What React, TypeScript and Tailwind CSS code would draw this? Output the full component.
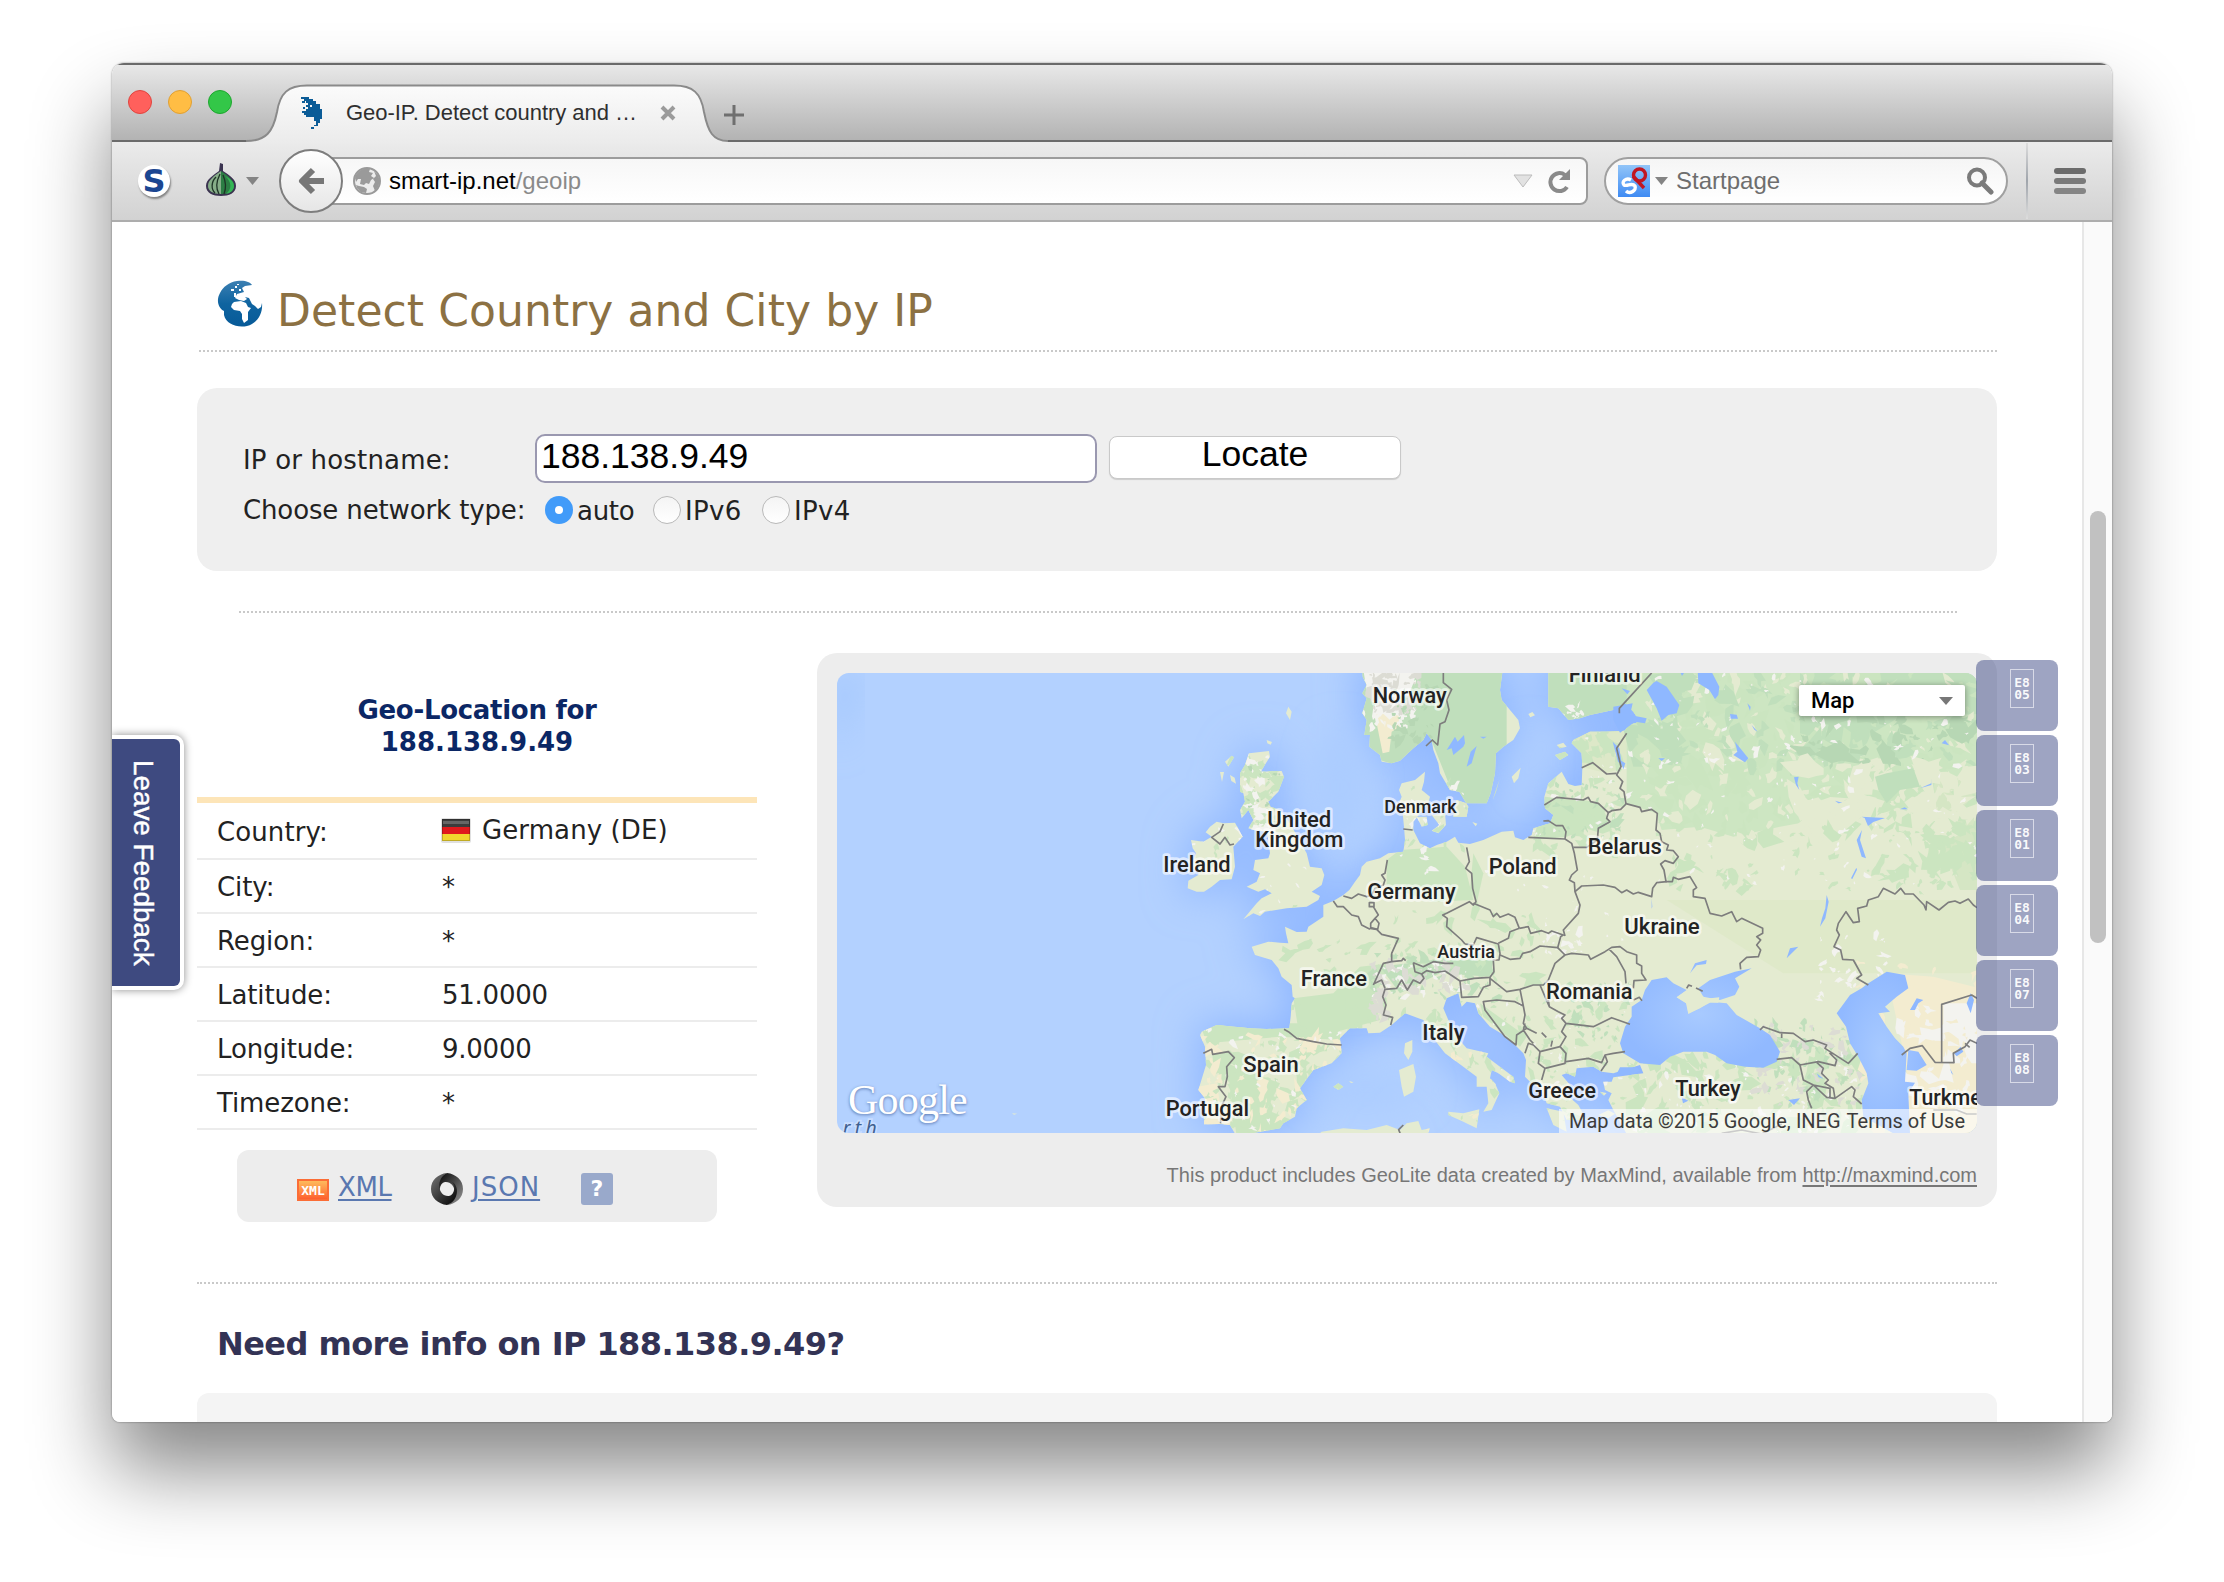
import React from "react";

/* ---------- map data: units are a third of a pixel ---------- */

const CONTINENT =
  "M2400,60 L1045,60 1045,200 1075,205 1105,240 1140,235 1170,225 1250,208 1275,190 1300,215 1320,245 1285,255 1275,272 1220,275 1170,275 1120,300 1115,310 1145,340 1147,385 1145,435 1125,438 1105,432 1085,395 1045,430 1033,470 1035,505 1060,525 1050,550 1000,565 995,585 970,600 945,592 940,572 905,575 850,600 810,612 775,608 765,590 740,605 710,615 690,625 660,610 640,570 640,545 660,520 685,490 690,470 665,450 672,425 675,395 645,420 605,430 597,450 605,470 597,490 608,520 612,560 615,600 610,635 565,640 540,655 500,665 485,680 480,705 465,725 448,750 430,765 400,783 370,795 370,830 325,860 320,875 290,876 255,860 258,880 265,910 240,908 205,905 155,920 165,945 215,960 235,985 245,1010 275,1035 278,1070 285,1075 275,1090 272,1130 268,1165 200,1167 150,1165 50,1155 5,1175 0,1185 15,1220 18,1275 -5,1350 15,1375 12,1453 60,1452 90,1455 110,1490 180,1475 240,1465 250,1450 285,1430 290,1405 320,1380 300,1345 340,1290 395,1270 425,1240 420,1195 450,1165 500,1165 505,1180 540,1178 575,1155 615,1120 670,1140 700,1195 735,1240 790,1280 830,1310 830,1340 860,1340 865,1390 850,1415 875,1410 898,1360 885,1330 870,1315 875,1290 895,1300 930,1325 945,1330 940,1310 900,1280 860,1250 865,1240 800,1225 770,1190 745,1140 730,1105 740,1075 775,1060 785,1100 800,1085 825,1090 835,1120 870,1160 920,1190 945,1215 970,1240 978,1260 975,1310 990,1325 1025,1350 1040,1390 1080,1400 1100,1440 1160,1440 1135,1395 1095,1360 1115,1340 1085,1305 1100,1300 1125,1310 1130,1285 1180,1280 1205,1295 1240,1300 1320,1275 1330,1300 1240,1312 1235,1325 1210,1325 1215,1350 1235,1360 1225,1380 1240,1410 1290,1500 2400,1500 Z";

const ISLANDS = [
  "M147,340 L207,333 210,350 182,395 245,393 252,410 235,455 205,485 212,500 240,510 270,550 320,640 330,680 365,685 373,705 365,735 335,755 360,768 355,780 320,800 260,805 195,815 180,828 160,820 130,838 170,790 185,775 215,760 195,748 175,755 140,740 170,725 180,700 160,690 165,660 205,655 210,640 205,600 200,575 160,570 145,565 160,540 145,510 125,535 120,510 135,485 130,460 120,455 120,430 120,400 135,375 Z",
  "M-27,600 L10,605 35,590 17,577 30,560 50,545 70,550 105,548 128,590 100,620 105,680 95,718 60,720 35,740 12,755 -10,755 -37,745 -35,722 -5,705 -5,690 -30,685 -12,640 -22,625 Z",
  "M485,60 L488,110 500,135 487,160 500,175 487,220 500,240 493,285 510,285 508,320 540,345 545,365 575,370 600,362 640,325 670,300 680,280 695,300 700,330 715,370 720,400 750,450 778,455 805,500 800,530 760,530 770,480 800,490 860,490 872,460 885,400 888,340 910,320 940,300 960,265 955,240 930,210 905,180 900,150 912,60 Z",
  "M695,525 L735,520 738,555 715,580 695,572 718,555 Z M650,530 L680,530 683,555 665,560 Z M817,546 l15,5 -5,8 Z",
  "M615,1210 L637,1200 637,1235 625,1260 612,1240 Z M597,1290 L640,1272 648,1310 640,1355 612,1370 605,1340 Z",
  "M745,1415 L790,1420 838,1408 830,1465 790,1445 745,1425 Z M400,1340 L415,1330 430,1340 415,1350 Z M447,1323 l14,4 -8,2Z",
  "M935,410 L962,383 955,415 942,430 Z M878,480 L898,420 888,455 Z M1065,345 L1095,335 1105,345 1080,360 Z M1070,315 L1090,308 1100,320 1080,325 Z M985,222 l12,-6 8,10 -14,6Z",
  "M265,200 L275,215 270,240 258,220 Z M200,300 l16,6 -4,8 -10,-4Z M75,365 L95,347 102,352 85,380 Z M60,396 h12 l-6,30Z M90,405 l14,8 4,18 -14,-8Z M-564,1420 l16,1 -10,3Z",
  "M350,1490 L365,1475 430,1465 500,1470 560,1455 600,1470 620,1450 655,1443 665,1470 690,1465 680,1490 Z M1040,1405 l50,10 10,60 -40,-20Z M1200,1355 l20,4 -8,8Z M1195,1425 l30,-14 20,10 -20,14Z",
];

const LAKES = [
  "M740,330 L765,290 773,305 792,285 795,310 790,320 760,345 755,325 Z M800,380 L812,335 830,318 815,370 Z M840,290 h20 l-10,6Z",
  "M1340,150 L1360,128 1370,123 1400,140 1438,195 1430,220 1405,225 1385,242 1370,205 Z",
  "M1493,90 L1532,90 1558,140 1555,165 1545,178 1528,150 1495,130 Z M1438,90 h20 l-12,18Z",
  "M1240,200 L1298,190 1290,225 1340,235 1335,250 1305,245 1260,278 1240,240 Z M1265,145 l25,8 -8,10Z",
  "M1238,305 l20,20 8,50 -12,-10Z M1260,360 l16,10 -6,18Z",
  "M1605,305 L1645,355 1635,367 1600,345 1612,335 Z M1590,222 l20,2 4,12 -22,0Z M1642,190 l10,10 -2,12Z M1655,255 l18,20 -10,-6Z",
  "M1782,412 l14,-2 -4,20 6,20 -10,-15Z M1985,530 l70,4 -35,12 -16,12 -10,-24Z M1970,600 L1986,570 1980,600 1998,655 1985,650Z M1953,715 l16,-32 2,6 -14,28Z",
  "M2160,445 l34,-15 2,-15 -2,20Z M2225,310 l10,-10 12,16Z M1905,482 l22,6 -12,2Z M2100,508 l14,-6 10,6Z M1375,355 l20,0 -10,8Z",
  "M1880,765 l6,20 -10,50 -16,25 6,-25 10,-30Z M1355,775 l2,25 -2,6Z",
];

const BLACK_SEA =
  "M1355,1020 L1400,1012 1420,1030 1460,1050 1430,1072 1460,1090 1465,1120 1500,1105 1530,1085 1580,1090 1610,1125 1680,1165 1710,1185 1740,1235 1730,1265 1690,1283 1635,1280 1580,1270 1545,1245 1520,1235 1450,1235 1410,1250 1380,1275 1320,1270 1270,1240 1260,1210 1275,1160 1295,1130 1295,1100 1325,1080 1335,1050 Z M1495,1045 L1530,1020 1605,995 1655,985 1605,1015 1618,1040 1605,1065 1560,1080 1510,1070 Z M1470,1000 l15,-30 35,-10 -2,12 -28,4Z";

const CASPIAN =
  "M2005,1030 L2060,995 2115,1005 2125,1045 2090,1070 2055,1100 2070,1115 2035,1120 2060,1160 2085,1195 2110,1220 2120,1240 2115,1325 2145,1328 2125,1360 2130,1480 2080,1480 1990,1430 1985,1380 2005,1330 2000,1300 1975,1250 1950,1210 1938,1160 1910,1120 1950,1065 1985,1045 Z M2125,1230 L2155,1235 2180,1275 2150,1292 2120,1290 Z";

const EAST_WATER =
  "M1760,955 l10,-30 25,-5 -20,20Z M2130,1110 l20,-35 20,5 -15,10 -10,20Z M2300,1090 l12,-30 10,20 -10,40Z M2262,1240 l20,-20 8,15 -20,14Z M1765,1380 l35,-5 -18,20Z M1850,1300 l20,16 -14,-4Z M1260,1282 h50 l10,10 -30,12 -40,-2Z M1445,1372 l20,10 -16,8Z M2250,1285 l10,20 -6,-6Z";

const BORDERS = [
  "M70,552 L60,575 35,592 60,612 75,592 90,615 102,612",
  "M730,90 V128 L755,148 740,180 747,210 735,245 720,252 713,315 697,300 678,318",
  "M1355,99 L1258,205 1258,220",
  "M610,567 L638,570",
  "M1280,280 L1250,325 1263,380 1250,405 1268,425 1260,445 1272,455 1278,492",
  "M1145,383 L1178,368 1220,402 1250,400",
  "M1033,495 L1070,472 1150,480 1165,472 1172,485 1195,490 1225,518 1235,512 1262,508 1278,492",
  "M1225,518 L1220,535 1230,545 1195,565 1192,600 1160,622 1120,622",
  "M1030,543 L1045,542 1068,557 1088,557 1098,575 1095,597 M985,592 L1095,597 1115,610 1123,640 1132,690 1115,705 1108,720 1123,728 1125,755 1140,795 1135,820 1090,870 1095,888",
  "M1125,755 L1145,738 1210,735 1245,742 1265,758 1280,750 1300,762 1315,757 1355,770 1358,745 1370,728 1400,725",
  "M1275,490 L1320,502 1325,515 1355,508 1372,520 1368,570 1380,580 1385,605 1405,615 1400,630 1420,632 1435,650 1420,670 1395,662 1382,672 1392,690 1398,725 1417,725 1420,712 1435,718 1470,710 1490,743 1480,750 1480,770 1515,775 1530,820 1565,828 1595,815 1610,845 1625,835 1688,865 1688,880 1670,890 1682,900 1670,915 1682,930 1675,950 1640,952 1620,970 1622,988",
  "M2331,803 L2320,795 2305,777 2280,790 2265,783 2245,787 2217,810 2180,785 2178,810 2172,795 2140,762 2115,762 2102,745 2085,762 2050,745 2035,770 2005,780 2000,798 1973,805 1978,845 1960,848 1938,815 1915,850 1910,870 1918,885 1902,920 1922,930 1928,958 1960,960 1985,1005 1970,1015 2005,1035",
  "M2331,1075 L2315,1065 2225,1093 2225,1268 M2105,1245 L2130,1225 2167,1217 2205,1267 2262,1268 2260,1240 2295,1220 2310,1200 2331,1210 M2295,1210 l14,12",
  "M1680,1170 L1690,1160 1740,1178 1780,1180 1815,1205 1840,1200 1880,1215 1875,1225 1945,1270 1973,1240 M1730,1258 L1775,1253 1800,1275 1855,1265 1905,1277 1910,1260 1890,1240 1900,1240 M1745,1180 v14",
  "M1800,1275 L1810,1320 1840,1335 1820,1355 1825,1380 1835,1405 M1850,1267 L1870,1285 1865,1300 1885,1320 1875,1330 1900,1345 1905,1375 1880,1372 1840,1335 1890,1345 1890,1372 M1905,1375 L1955,1340 1965,1350 1960,1370 1985,1392",
  "M1460,1045 l6,-10 10,4 M1488,1044 l20,10",
  "M800,622 L808,665 797,685 815,700 818,745 828,785 820,795 808,785 740,820 728,825 742,835 740,860 785,900 795,912",
  "M562,660 L555,700 545,705 555,720 550,735 525,745 515,765 500,770 475,762 455,775 430,768",
  "M400,783 L412,800 430,800 455,825 475,830 485,855 510,868 M508,788 h14 v12 h-14 Z M520,800 L535,825 525,835 512,850 512,863 533,868 537,850 525,835",
  "M510,865 L530,868 545,883 595,895 575,940 575,965 605,962 610,955 617,962 M575,965 L550,970 520,1035 M520,1032 L545,1020 555,1045",
  "M640,968 L645,995 665,1002 672,1015 660,1030 640,1020 622,1050 605,1020 590,1045 555,1048 548,1070 558,1095 550,1125 578,1132 572,1155",
  "M640,968 L670,980 700,965 735,970 760,970 M795,912 L820,915 830,893 895,912 900,940 897,960 880,960 882,995 870,1012 822,1015 780,1023 735,993 705,998 680,992 665,1002",
  "M820,790 L870,810 880,830 890,820 900,832 925,822 945,832 958,865 M958,865 L930,875 925,895 895,910",
  "M958,865 L985,860 992,880 1025,872 1045,880 1055,873 1090,885 1082,890 1073,923 1020,918 990,935 968,940 960,955 930,958 900,945",
  "M1073,923 L1095,945 1115,940 1165,945 1172,958 1215,935 1235,922 1260,920 1280,935 1310,945 1310,970 1325,978 1325,1000 1338,1020 1302,1022 1300,1045 M1228,928 L1250,950 1275,995 1278,1030",
  "M1095,945 L1065,970 1045,1020 1030,1035 1000,1035 960,1048 920,1055 870,1015",
  "M780,1023 L785,1072 835,1070 850,1042 870,1035 870,1012",
  "M850,1085 L890,1080 945,1085 970,1098 975,1125 970,1150 980,1165 950,1185 948,1215 915,1190 855,1110 Z M960,1048 L970,1098 M980,1165 L1010,1180 M975,1150 l-5,20 20,30 10,10",
  "M1020,1035 L1035,1070 1048,1100 1075,1115 1095,1125 1085,1135 1098,1150 1180,1160 1235,1133 1290,1153 M1098,1150 L1085,1175 1098,1190 1080,1220 M1045,1080 l3,20 M1025,1178 l14,14 M1057,1202 l-4,18",
  "M1020,1235 L1080,1220 1098,1240 1095,1270 1035,1285 1015,1270 Z M975,1240 L985,1210 1000,1215 1020,1235 M1035,1285 L1025,1320",
  "M1098,1265 L1165,1255 1205,1268 1215,1245 1240,1240 1275,1235 M1215,1245 L1222,1265 1203,1293",
  "M252,1168 L265,1175 290,1195 340,1205 380,1212 425,1215",
  "M10,1240 L35,1228 38,1243 85,1235 103,1253 80,1280 82,1310 75,1340 55,1340 78,1370 62,1405 62,1450",
  "M610,1455 l-14,14 8,20 M1565,1480 l60,-10 60,12 60,-30 M2200,1410 h70 l30,12 30,0",
  "M1300,1080 l18,-8 8,10",
];

function rng(seed: number) {
  let s = seed;
  return () => {
    s = (s * 1664525 + 1013904223) % 4294967296;
    return s / 4294967296;
  };
}

/** One path holding many small irregular polygons: the land-cover mottling. */
function patches(seed: number, n: number, x0: number, y0: number, x1: number, y1: number, size: number) {
  const r = rng(seed);
  let d = "";
  for (let i = 0; i < n; i++) {
    const cx = x0 + r() * (x1 - x0);
    const cy = y0 + r() * (y1 - y0);
    const k = size * (0.3 + r() * r() * 1.6);
    const v = 5 + Math.floor(r() * 7);
    const tilt = r() * 3;
    for (let j = 0; j < v; j++) {
      const a = (j / v) * Math.PI * 2;
      const q = k * (0.25 + r() * 1.15);
      const px = Math.cos(a) * q * 1.4;
      const py = Math.sin(a) * q * 0.75;
      const x = cx + px * Math.cos(tilt) - py * Math.sin(tilt);
      const y = cy + px * Math.sin(tilt) + py * Math.cos(tilt);
      d += (j ? "L" : "M") + x.toFixed(0) + "," + y.toFixed(0);
    }
    d += "Z";
  }
  return d;
}

const G1 = "#cbe5c0";
const G2 = "#c0dfbc";
const G3 = "#b7d7b4";
const CR = "#e4ebd1";
const BE = "#f3ecd0";
const WH = "#f3f3ef";
const GY = "#dcdcd4";

const COVER: [string, string][] = [
  [G1, patches(3, 200, 1330, 100, 2340, 600, 30)],
  [CR, patches(4, 130, 1330, 100, 2340, 600, 17)],
  [G2, patches(5, 90, 1330, 100, 2340, 380, 32)],
  [G3, patches(6, 45, 1780, 200, 2340, 380, 26)],
  [CR, patches(42, 60, 1800, 360, 2340, 600, 34)],
  [G1, patches(7, 60, 1400, 560, 2340, 760, 18)],
  [G1, patches(43, 40, 2150, 560, 2340, 740, 24)],
  [WH, patches(8, 130, 1330, 100, 2340, 740, 8)],
  [G1, patches(9, 70, 1000, 270, 1270, 640, 20)],
  [G2, patches(44, 24, 1030, 420, 1270, 600, 14)],
  [WH, patches(10, 34, 1000, 270, 1300, 640, 9)],
  [WH, patches(45, 20, 860, 640, 1300, 900, 6)],
  [G1, patches(11, 80, 230, 800, 1000, 1180, 20)],
  [G2, patches(12, 60, 520, 940, 900, 1080, 14)],
  [WH, patches(13, 50, 520, 970, 800, 1070, 10)],
  [GY, patches(14, 40, 510, 970, 800, 1060, 13)],
  [GY, patches(46, 26, 515, 1040, 560, 1140, 12)],
  [WH, patches(47, 14, 290, 1195, 420, 1225, 8)],
  [G1, patches(15, 80, 0, 1160, 430, 1480, 24)],
  [BE, patches(16, 70, -10, 1190, 420, 1480, 19)],
  [WH, patches(17, 40, 0, 1160, 430, 1480, 8)],
  [G1, patches(18, 130, 690, 1080, 1300, 1480, 17)],
  [BE, patches(19, 30, 680, 1180, 900, 1480, 12)],
  [WH, patches(20, 50, 800, 1060, 1300, 1400, 7)],
  [G2, patches(48, 34, 1090, 1020, 1290, 1200, 13)],
  [WH, patches(49, 24, 1000, 860, 1150, 940, 9)],
  [G1, patches(21, 100, 1300, 1240, 2000, 1480, 24)],
  [G2, patches(22, 60, 1640, 1140, 2000, 1400, 15)],
  [WH, patches(23, 80, 1300, 1240, 2000, 1480, 8)],
  [GY, patches(24, 60, 1660, 1150, 2000, 1400, 12)],
  [WH, patches(25, 30, 1850, 880, 2060, 1080, 11)],
  [BE, patches(26, 60, 1980, 960, 2340, 1480, 26)],
  [WH, patches(27, 40, 2080, 1100, 2340, 1440, 24)],
  [G1, patches(28, 50, 120, 340, 250, 560, 18)],
  [WH, patches(29, 46, 110, 340, 210, 620, 13)],
  [G3, patches(30, 16, 120, 380, 240, 500, 9)],
  [WH, patches(31, 16, 140, 620, 370, 830, 6)],
  [G1, patches(32, 10, -30, 550, 120, 750, 9)],
  [WH, patches(33, 8, -40, 550, 60, 620, 12)],
  [G1, patches(34, 24, 600, 430, 830, 640, 12)],
  [WH, patches(35, 30, 590, 420, 800, 700, 9)],
  [WH, patches(36, 60, 485, 90, 640, 260, 17)],
  [GY, patches(38, 70, 500, 95, 660, 220, 14)],
  [G3, patches(39, 34, 580, 140, 700, 310, 14)],
  [WH, patches(40, 14, 1040, 190, 1150, 250, 8)],
];

const LABELS: { t: string; x: number; y: number; w: number; s?: number }[] = [
  { t: "Norway", x: 518, y: 188, w: 222 },
  { t: "Finland", x: 1106, y: 126, w: 216 },
  { t: "United", x: 202, y: 560, w: 192 },
  { t: "Kingdom", x: 166, y: 620, w: 264 },
  { t: "Denmark", x: 553, y: 519, w: 217, s: 56 },
  { t: "Ireland", x: -110, y: 696, w: 202 },
  { t: "Belarus", x: 1163, y: 641, w: 222 },
  { t: "Poland", x: 866, y: 701, w: 204 },
  { t: "Germany", x: 502, y: 776, w: 265 },
  { t: "Ukraine", x: 1273, y: 881, w: 226 },
  { t: "Austria", x: 712, y: 955, w: 173, s: 56 },
  { t: "France", x: 302, y: 1038, w: 199 },
  { t: "Romania", x: 1038, y: 1076, w: 260 },
  { t: "Italy", x: 667, y: 1199, w: 127 },
  { t: "Spain", x: 130, y: 1296, w: 166 },
  { t: "Greece", x: 985, y: 1374, w: 203 },
  { t: "Turkey", x: 1426, y: 1368, w: 196 },
  { t: "Portugal", x: -103, y: 1427, w: 250 },
  { t: "Turkmenistan", x: 2128, y: 1394, w: 392 },
];

function EuropeMap() {
  return (
    <svg viewBox="-1089 99 3420 1380" width="1140" height="460" className="block">
      <defs>
        <filter id="soft" x="-20%" y="-20%" width="140%" height="140%">
          <feGaussianBlur stdDeviation="62" />
        </filter>
        <filter id="soft2" x="-40%" y="-40%" width="180%" height="180%">
          <feGaussianBlur stdDeviation="50" />
        </filter>
        <radialGradient id="bs">
          <stop offset="0" stopColor="#a8caff" />
          <stop offset="1" stopColor="#91b9ff" />
        </radialGradient>
        <clipPath id="land">
          <path d={CONTINENT} />
          {ISLANDS.map((d) => (
            <path key={d} d={d} />
          ))}
        </clipPath>
      </defs>
      <rect x="-1089" y="99" width="3420" height="1380" fill="#b3d1ff" />
      <g filter="url(#soft)" fill="#8db5ff" stroke="#8db5ff" strokeWidth="24">
        <path d={CONTINENT} />
        {ISLANDS.slice(0, 3).map((d) => (
          <path key={d} d={d} />
        ))}
      </g>
      <g filter="url(#soft2)" fill="#abccff">
        <ellipse cx="420" cy="440" rx="80" ry="180" />
        <ellipse cx="500" cy="1350" rx="170" ry="50" />
        <ellipse cx="990" cy="360" rx="20" ry="100" />
      </g>
      <path d="M-1089,99 h60 l-30,160 -30,80Z" fill="#9dc3fb" filter="url(#soft2)" />
      <g clipPath="url(#land)">
        <rect x="-1089" y="99" width="3420" height="1380" fill={CR} />
        <path d="M480,60 H920 V330 L880,500 800,490 750,440 690,290 600,380 480,340Z" fill={G2} />
        <path d="M485,60 H660 L640,130 620,180 560,230 540,190 500,150Z" fill={WH} />
        <path d="M520,200 L580,190 608,215 600,260 575,275 568,335 548,340 538,290Z" fill={BE} />
        <path d="M745,440 L810,500 805,535 760,535Z" fill="#dde8c8" />
        <path d="M1040,60 H1400 V300 H1000Z" fill={G2} />
        <path d="M1110,260 H1280 V380 L1220,400 1100,370Z" fill="#dde8c8" />
        <path d="M1280,60 H2400 V420 L2250,480 2000,380 1850,540 1740,560 1600,590 1500,560 1385,570 1368,520 1280,490Z" fill="#cde6c2" />
        <path d="M1800,90 H2400 V220 L2100,230 1950,320 1800,280Z" fill={G2} />
        <path d="M1265,250 L1400,270 1480,300 1420,380 1300,380Z" fill={G2} />
        <path d="M1980,370 L2040,350 2100,370 2110,390 2030,410 1990,400Z" fill={CR} />
        <path d="M2200,420 h140 v330 h-60 L2220,600Z" fill="#d5e6c4" />
        <path d="M1035,470 L1200,490 1225,540 1100,590 1000,600Z" fill={G1} />
        <path d="M600,630 L740,620 795,680 820,780 700,785 560,740 560,660Z" fill={G1} />
        <path d="M820,640 l30,60 -20,90 -20,-40Z" fill={G1} />
        <path d="M280,1075 L400,1060 480,980 570,970 520,1080 540,1140 430,1170 300,1200Z" fill={G1} />
        <path d="M540,980 L700,960 880,960 870,1010 720,1000 600,1060Z" fill={G2} />
        <path d="M0,1150 h420 v50 l-180,-10 -220,20Z" fill={G1} />
        <path d="M80,1270 l160,60 -40,80 100,40 -60,40 h-130Z" fill={G1} />
        <path d="M840,1090 l140,100 -20,30 -110,-90Z" fill={G1} />
        <path d="M1400,780 H2400 V1000 H1750Z" fill="#dfe9c9" />
        <path d="M2060,1000 L2200,1010 2400,1060 V1480 H2120 V1280Z" fill={BE} />
        <path d="M2230,1090 h120 v180 h-120Z" fill={WH} />
        <path d="M-60,1350 l110,-20 20,120 -90,20Z" fill={BE} />
        {COVER.map(([c, d]) => (
          <path key={d.slice(0, 30)} d={d} fill={c} />
        ))}
        <path d="M2025,410 L2060,400 2140,385 2160,440 2100,450 2060,490 2035,450Z" fill={G2} />
      </g>
      <g fill="#8fb8ff">
        {LAKES.map((d) => (
          <path key={d} d={d} />
        ))}
        <path d={EAST_WATER} />
      </g>
      <path d={BLACK_SEA} fill="url(#bs)" />
      <path d="M1430,1072 L1462,1050 1500,1062 1518,1076 1558,1072 1555,1088 1530,1088 1465,1122 1458,1090Z" fill={CR} />
      <path d={CASPIAN} fill="url(#bs)" />
      <g fill="none" stroke="#7d7d7d" strokeWidth="5" strokeLinejoin="round">
        {BORDERS.map((d) => (
          <path key={d} d={d} />
        ))}
      </g>
      <g
        fontFamily="Roboto, sans-serif"
        fontWeight="500"
        fill="#232323"
        stroke="#ffffff"
        strokeOpacity="0.6"
        strokeWidth="16"
        strokeLinejoin="round"
        style={{ paintOrder: "stroke" }}
      >
        {LABELS.map((l) => (
          <text key={l.t} x={l.x} y={l.y} fontSize={l.s ?? 67} textLength={l.w} lengthAdjust="spacingAndGlyphs">
            {l.t}
          </text>
        ))}
      </g>
      <text
        x="-1072"
        y="1484"
        fontFamily="'Noto Sans', sans-serif"
        fontStyle="italic"
        fontSize="58"
        fill="#3f5f8f"
        stroke="#c9deff"
        strokeWidth="10"
        letterSpacing="13"
        style={{ paintOrder: "stroke" }}
      >
        rth
      </text>
    </svg>
  );
}

/* ---------- small icons ---------- */

function TabShape() {
  return (
    <svg width="482" height="60" viewBox="0 0 482 60" className="absolute left-[134px] top-[19px]">
      <defs>
        <linearGradient id="tab" x1="0" y1="0" x2="0" y2="1">
          <stop offset="0" stopColor="#fbfbfb" />
          <stop offset="1" stopColor="#ebebeb" />
        </linearGradient>
      </defs>
      <path
        d="M0,60 V57 C20,57 27,48 31,28 C34,9 42,1.5 61,1.5 H428 C447,1.5 455,9 458,28 C462,48 467,57 482,57 V60Z"
        fill="url(#tab)"
      />
      <path
        d="M0,57 C20,57 27,48 31,28 C34,9 42,1.5 61,1.5 H428 C447,1.5 455,9 458,28 C462,48 467,57 482,57"
        fill="none"
        stroke="#8a8a8a"
        strokeWidth="2"
      />
    </svg>
  );
}

const Favicon = () => (
  <svg width="24" height="32" viewBox="0 0 24 32" className="shrink-0">
    <path
      fill="#0b5c97"
      d="M1,0H9V2H13V4H16V7H20V12H22V22H20V26H18V29H14V32H11V30H14V28H16V24H14V20H6V18H4V16H2V14H6V12H8V10H6V8H8V6H6V4H4V2H1Z M2,4h3v2h-3z M3,10h2v2h-2z M10,8h2v2h-2z"
      fillRule="evenodd"
    />
  </svg>
);

const HeadGlobe = () => (
  <svg width="46" height="48" viewBox="0 0 46 48">
    <defs>
      <linearGradient id="gl" x1="0" y1="0" x2="0" y2="1">
        <stop offset="0" stopColor="#3b7fb2" />
        <stop offset="0.5" stopColor="#0f64a0" />
        <stop offset="1" stopColor="#075a98" />
      </linearGradient>
    </defs>
    <path
      fill="url(#gl)"
      d="M20,1 C28,0 33,2 35,5 L28,6 L25,8 L27,12 L20,14 L18,18 L22,20 L27,21 L30,19 L28,17 L32,18 L35,24 L38,26 L41,29 L44,27 L45,23 C46,33 41,43 30,46 C20,48 9,44 7,35 L7,31 C1,28 -1,20 3,13 C6,7 12,2 20,1Z"
    />
    <path
      fill="#fff"
      d="M15,24 L17,22 L24,21 L29,23 L31,27 L34,28 L31,32 L31,40 L27,43 L25,39 L25,34 L23,31 L17,30 L14,27Z M14,9h3v2h-3z M18,6h2v2h-2z M22,9h2v2h-2z M17,13h2v4h-2z M20,4h2v1h-2z"
    />
  </svg>
);

const Flag = () => (
  <svg width="32" height="30" viewBox="0 0 32 30" className="-ml-[2px] mt-[2px]">
    <rect x="1" y="1" width="30" height="25" rx="2" fill="#000" opacity="0.12" />
    <rect x="2" y="2" width="28" height="8" fill="#3c3c3c" />
    <rect x="3" y="4" width="26" height="3" fill="#666" />
    <rect x="2" y="10" width="28" height="7" fill="#e01a1d" />
    <rect x="2" y="17" width="28" height="7" fill="#f1d62e" />
    <rect x="2.5" y="2.5" width="27" height="21" fill="none" stroke="#000" strokeOpacity="0.2" />
  </svg>
);

const Onion = () => (
  <svg width="32" height="34" viewBox="0 0 32 34">
    <path d="M15,0 L18,1 L18,8 C24,12 31,16 31,23 C31,30 24,33 16,33 C8,33 1,30 1,23 C1,16 9,12 14,8Z" fill="#3b3350" />
    <path d="M16,8 C9,13 3,17 3,23 C3,28 8,31 16,31 Z" fill="#86ad88" />
    <path d="M16,8 C23,13 29,17 29,23 C29,28 24,31 16,31 Z" fill="#2c7d44" />
    <path d="M20,13 C27,19 27,26 21,31 C26,30 29,27 29,23 C29,18 24,15 20,13Z" fill="#35b556" />
    <path d="M11,14 C6,19 6,26 10,30 M15,11 C11,19 11,26 14,31 M18,12 C21,19 21,26 19,31" fill="none" stroke="#1d3325" strokeWidth="1.3" />
  </svg>
);

const GreyGlobe = () => (
  <svg width="28" height="28" viewBox="0 0 28 28" className="shrink-0">
    <circle cx="14" cy="14" r="13" fill="#ececec" stroke="#9a9a9a" strokeWidth="2" />
    <path
      fill="#9a9a9a"
      d="M2,11 C3,6 8,2 13,1.5 L17,2 L16,5 L20,6 L18,9 L21,11 L18,13 L16,17 L13,16 L11,18 L7,17 L8,12 L5,12 L3,15Z M21,4 L25,8 L27,14 L25,20 L22,24 L20,19 L22,15 L20,12 L23,9Z M3,18 L6,19 L11,20 L14,22 L13,26 L8,25 L4,21Z"
    />
  </svg>
);

const SpIcon = () => (
  <svg width="32" height="32" viewBox="0 0 32 32" className="shrink-0">
    <defs>
      <linearGradient id="sp" x1="0" y1="0" x2="0" y2="1">
        <stop offset="0" stopColor="#92c5f8" />
        <stop offset="1" stopColor="#3f8bf3" />
      </linearGradient>
    </defs>
    <rect width="32" height="32" fill="url(#sp)" />
    <path d="M13,15 C8,12 3,17 6,20 C9,22 14,17 17,21 C19,25 12,30 8,26" fill="none" stroke="#fff" strokeWidth="3.4" />
    <circle cx="21.5" cy="10" r="6" fill="none" stroke="#c11621" strokeWidth="3.4" />
    <path d="M15,11 L26,23" stroke="#c11621" strokeWidth="3.4" />
  </svg>
);

const JsonIcon = () => (
  <svg width="32" height="32" viewBox="0 0 32 32">
    <defs>
      <linearGradient id="js1" x1="0" y1="0" x2="1" y2="1">
        <stop offset="0" stopColor="#000" />
        <stop offset="1" stopColor="#9a9a9a" />
      </linearGradient>
      <linearGradient id="js2" x1="1" y1="1" x2="0" y2="0">
        <stop offset="0" stopColor="#000" />
        <stop offset="1" stopColor="#777" />
      </linearGradient>
    </defs>
    <path d="M16,0 C25,1 32,7 32,16 C32,25 25,31 16,32 C28,26 25,8 14,9 C8,10 7,20 12,24 C3,20 4,4 16,0Z" fill="url(#js1)" />
    <path d="M16,32 C7,31 0,25 0,16 C0,7 7,1 16,0 C4,6 7,24 18,23 C24,22 25,12 20,8 C29,12 28,28 16,32Z" fill="url(#js2)" />
  </svg>
);

const Triangle = ({ w, h, c }: { w: number; h: number; c: string }) => (
  <svg width={w} height={h} viewBox="0 0 14 8" preserveAspectRatio="none" className="shrink-0">
    <path d="M0,0H14L7,8Z" fill={c} />
  </svg>
);

/* ---------- browser chrome ---------- */

function TitleBar() {
  return (
    <div className="relative h-[79px] shrink-0 border-t-2 border-b-2 border-t-[#6a6a6a] border-b-[#6b6b6b] bg-linear-to-b from-[#e8e8e8] to-[#b3b3b3]">
      <div className="absolute left-[16px] top-[25px] flex gap-[16px]">
        <div className="size-[24px] rounded-full border border-[#e0443e] bg-[#ff605c]" />
        <div className="size-[24px] rounded-full border border-[#e0a033] bg-[#ffbd44]" />
        <div className="size-[24px] rounded-full border border-[#1da72e] bg-[#33c748]" />
      </div>
      <TabShape />
      <div className="absolute left-[188px] top-[30px] flex h-[36px] items-center">
        <Favicon />
        <span className="ml-[22px] w-[292px] whitespace-nowrap text-[22px] leading-[36px] tracking-[-0.03px] text-[#2f2f2f]">
          Geo-IP. Detect country and …
        </span>
        <svg width="16" height="16" viewBox="0 0 16 16" className="ml-[22px]">
          <path d="M2,2L14,14M14,2L2,14" stroke="#9b9b9b" strokeWidth="4" />
        </svg>
      </div>
      <svg width="22" height="22" viewBox="0 0 22 22" className="absolute left-[611px] top-[39px]">
        <path d="M11,1V21M1,11H21" stroke="#6f6f6f" strokeWidth="3" />
      </svg>
    </div>
  );
}

function ToolBar() {
  return (
    <div className="flex h-[80px] shrink-0 items-center border-b-2 border-[#adadad] bg-linear-to-b from-[#ebebeb] to-[#d2d2d2]">
      <div className="ml-[26px] flex size-[32px] items-center justify-center rounded-full bg-white shadow-[1px_2px_2px_rgba(0,0,0,0.4)]">
        <span className="font-['DejaVu_Sans'] text-[32px] font-bold leading-[32px] text-[#1b4691]">S</span>
      </div>
      <div className="ml-[35px] -mt-[2px]">
        <Onion />
      </div>
      <div className="ml-[9px]">
        <Triangle w={13} h={8} c="#848484" />
      </div>
      <div className="z-10 ml-[20px] flex size-[64px] shrink-0 items-center justify-center rounded-full border-2 border-[#7d7d7d] bg-linear-to-b from-white to-[#e6e6e6]">
        <svg width="28" height="30" viewBox="0 0 28 30">
          <path d="M16,4L5,15L16,26M6,15H27" fill="none" stroke="#777" strokeWidth="6" strokeLinejoin="round" />
        </svg>
      </div>
      <div className="-ml-[14px] flex h-[48px] w-[1259px] items-center rounded-r-[8px] border-2 border-[#9c9c9c] bg-linear-to-b from-[#f7f7f7] to-white pl-[22px]">
        <GreyGlobe />
        <span className="ml-[8px] text-[24px] leading-[44px] text-black">
          smart-ip.net<span className="text-[#8a8a8a]">/geoip</span>
        </span>
        <div className="ml-auto mr-[12px] flex items-center gap-[14px]">
          <svg width="20" height="14" viewBox="0 0 20 14">
            <path d="M1,1H19L10,13Z" fill="#e2e2e2" stroke="#bcbcbc" />
          </svg>
          <svg width="25" height="26" viewBox="0 0 25 26" className="mr-[2px]">
            <path d="M20,19 A9,9 0 1 1 18,7" fill="none" stroke="#8a8a8a" strokeWidth="4" />
            <path d="M23,1V12H12Z" fill="#8a8a8a" />
          </svg>
        </div>
      </div>
      <div className="ml-[16px] flex h-[48px] w-[404px] items-center rounded-full border-2 border-[#a0a0a0] bg-linear-to-b from-[#f5f5f5] to-white pl-[12px] pr-[12px]">
        <SpIcon />
        <span className="ml-[5px]">
          <Triangle w={13} h={8} c="#848484" />
        </span>
        <span className="ml-[8px] text-[24px] leading-[44px] text-[#6e6e6e]">Startpage</span>
        <svg width="28" height="28" viewBox="0 0 28 28" className="ml-auto">
          <circle cx="11" cy="10.5" r="8" fill="none" stroke="#7b7b7b" strokeWidth="4" />
          <path d="M16,16L25,25" stroke="#7b7b7b" strokeWidth="5" strokeLinecap="round" />
        </svg>
      </div>
      <div className="ml-[18px] h-[76px] w-[2px] bg-linear-to-b from-[#dddddd] via-[#a0a5ac] to-[#dddddd]" />
      <div className="ml-[26px] flex flex-col gap-[4px]">
        <div className="h-[6px] w-[32px] rounded-[3px] bg-[#6c6c6c]" />
        <div className="h-[6px] w-[32px] rounded-[3px] bg-[#7a7a7a]" />
        <div className="h-[6px] w-[32px] rounded-[3px] bg-[#858585]" />
      </div>
    </div>
  );
}

/* ---------- page ---------- */

function Radio({ label, checked }: { label: string; checked?: boolean }) {
  return (
    <label className="flex items-center">
      {checked ? (
        <span className="flex size-[28px] items-center justify-center rounded-full bg-[#419bf9]">
          <span className="size-[8px] rounded-full bg-white" />
        </span>
      ) : (
        <span className="size-[28px] rounded-full border border-[#b9b9b9] bg-linear-to-b from-[#f4f4f4] to-white" />
      )}
      <span className="ml-[4px] mt-px">{label}</span>
    </label>
  );
}

function SearchForm() {
  return (
    <div className="h-[183px] rounded-[20px] bg-[#efefef] pl-[46px] pt-[46px] font-['DejaVu_Sans',sans-serif] text-[26px] text-[#222]">
      <div className="flex h-[49px]">
        <span className="w-[292px] pt-[10px] leading-[32px] tracking-[0.18px]">IP or hostname:</span>
        <div className="h-[49px] w-[562px] rounded-[10px] border-2 border-[#9a98b0] bg-white pl-[4px] font-['Liberation_Sans'] text-[35.5px] leading-[41px] text-black">
          188.138.9.49
        </div>
        <div className="ml-[12px] mt-[2px] h-[43px] w-[292px] rounded-[8px] border border-[#c9c9c9] bg-white text-center font-['Liberation_Sans'] text-[35.5px] leading-[35px] text-black shadow-[0_1px_1px_rgba(0,0,0,0.15)]">
          Locate
        </div>
      </div>
      <div className="mt-[11px] flex h-[32px] items-center leading-[32px]">
        <span className="w-[302px] whitespace-nowrap tracking-[-0.13px]">Choose network type:</span>
        <div className="w-[108px] tracking-[-0.3px]">
          <Radio label="auto" checked />
        </div>
        <div className="w-[109px] tracking-[0.3px]">
          <Radio label="IPv6" />
        </div>
        <div className="tracking-[0.3px]">
          <Radio label="IPv4" />
        </div>
      </div>
    </div>
  );
}

const ROWS: [string, string][] = [
  ["City:", "*"],
  ["Region:", "*"],
  ["Latitude:", "51.0000"],
  ["Longitude:", "9.0000"],
  ["Timezone:", "*"],
];

function GeoTable() {
  return (
    <div className="w-[560px] font-['DejaVu_Sans',sans-serif] text-[26px] text-[#222]">
      <div className="h-[144px] pt-[41px] text-center font-bold leading-[32px] text-[#0b2765]">
        <div className="tracking-[-0.3px]">Geo-Location for</div>
        <div>188.138.9.49</div>
      </div>
      <div className="h-[6px] bg-[#fde5b8]" />
      <div className="flex h-[57px] items-center border-b-2 border-[#ececec] pl-[20px]">
        <span className="mt-[3px] w-[225px] tracking-[0.1px]">Country:</span>
        <Flag />
        <span className="ml-[10px] -mt-[1px] tracking-[0.1px]">Germany (DE)</span>
      </div>
      {ROWS.map(([k, v]) => (
        <div key={k} className="flex h-[54px] items-center border-b-2 border-[#ececec] pl-[20px]">
          <span className="mt-[3px] w-[225px] tracking-[-0.1px]">{k}</span>
          <span className="mt-[3px] tracking-[-0.25px]">{v}</span>
        </div>
      ))}
      <div className="ml-[40px] mt-[20px] flex h-[72px] w-[480px] items-center rounded-[12px] bg-[#ededed] pl-[60px] text-[#5a78b0]">
        <div className="mt-[8px] flex h-[22px] w-[32px] items-center justify-center border-2 border-[#fb6d36] bg-linear-to-b from-[#fdba5c] to-[#fd5e2e] font-['DejaVu_Sans_Mono'] text-[13px] font-bold leading-none text-white">
          XML
        </div>
        <a className="ml-[9px] mt-[2px] w-[93px] tracking-[-0.4px] underline decoration-2 underline-offset-[3px]">XML</a>
        <div className="mt-[6px]">
          <JsonIcon />
        </div>
        <a className="ml-[9px] mt-[2px] w-[109px] tracking-[1px] underline decoration-2 underline-offset-[3px]">JSON</a>
        <div className="mt-[6px] flex size-[32px] items-center justify-center rounded-[3px] bg-[#99a9cb] text-[22px] font-bold leading-none text-white">
          ?
        </div>
      </div>
    </div>
  );
}

function MapPanel() {
  return (
    <div className="h-[554px] w-[1180px] rounded-[20px] bg-[#ededed] p-[20px]">
      <div className="relative h-[460px] w-[1140px] overflow-hidden rounded-[12px]">
        <EuropeMap />
        <div className="absolute left-[962px] top-[12px] flex h-[31px] w-[166px] items-center justify-between rounded-[2px] bg-white pl-[12px] pr-[12px] font-['Roboto'] text-[22px] font-medium text-black shadow-[0_1px_6px_rgba(0,0,0,0.4)]">
          Map
          <Triangle w={14} h={8} c="#777" />
        </div>
        <div className="absolute left-[11px] top-[403px] font-['Liberation_Serif'] text-[42px] leading-[48px] tracking-[-0.8px] text-white [text-shadow:0_1px_3px_rgba(60,90,150,0.8)]">
          Google
        </div>
        <div className="absolute bottom-0 right-0 flex h-[24px] w-[418px] items-center whitespace-nowrap bg-white/60 pl-[10px] font-['Roboto'] text-[20px] leading-[24px] text-[#3c3c3c]">
          <span className="w-[184px] overflow-visible">Map data ©2015 Google,</span>
          <span className="ml-auto mr-[6px]">INEG</span>
          <span className="mr-[12px]">Terms of Use</span>
        </div>
      </div>
      <div className="mt-[30px] whitespace-nowrap text-right text-[20px] leading-[24px] text-[#777]">
        This product includes GeoLite data created by MaxMind, available from{" "}
        <span className="underline underline-offset-[3px]">http://maxmind.com</span>
      </div>
    </div>
  );
}

function ShareRail() {
  return (
    <div className="absolute left-[1864px] top-[438px] flex flex-col gap-[4px]">
      {["05", "03", "01", "04", "07", "08"].map((c) => (
        <div key={c} className="h-[71px] w-[82px] rounded-[8px] bg-[#3e4a86]/50 pl-[34px] pt-[9px]">
          <div className="flex h-[39px] w-[24px] flex-col items-center justify-center border border-white/60 font-['DejaVu_Sans_Mono'] text-[13px] font-bold leading-[12px] text-white/95">
            <span>E8</span>
            <span>{c}</span>
          </div>
        </div>
      ))}
    </div>
  );
}

export default function App() {
  return (
    <div className="h-[1582px] w-[2224px] overflow-hidden bg-white pl-[112px] pt-[63px] font-['Liberation_Sans',sans-serif]">
      <div className="h-[1359px] w-[2000px] rounded-t-[12px] rounded-b-[8px] shadow-[0_0_2px_rgba(0,0,0,0.5),0_48px_80px_rgba(0,0,0,0.47)]">
        <div className="flex h-full w-full flex-col overflow-hidden rounded-t-[12px] rounded-b-[8px] bg-white">
          <TitleBar />
          <ToolBar />
          <div className="relative flex min-h-0 flex-1">
            <div className="w-[1970px] overflow-hidden pl-[85px]">
              <div className="w-[1800px]">
                <div className="ml-[2px] flex h-[130px] border-b-2 border-dotted border-[#c9c9c9]">
                  <div className="ml-[18px] mt-[58px]">
                    <HeadGlobe />
                  </div>
                  <h1 className="ml-[14px] mt-[63px] whitespace-nowrap font-['DejaVu_Sans',sans-serif] text-[44px] leading-[52px] tracking-[0.07px] text-[#8c7143]">
                    Detect Country and City by IP
                  </h1>
                </div>
                <div className="h-[36px]" />
                <SearchForm />
                <div className="ml-[42px] mr-[40px] h-[42px] border-b-2 border-dotted border-[#c9c9c9]" />
                <div className="mt-[40px] flex justify-between">
                  <GeoTable />
                  <MapPanel />
                </div>
                <div className="mt-[60px] border-b-2 border-dotted border-[#c9c9c9]" />
                <h2 className="ml-[20px] mt-[40px] h-[69px] whitespace-nowrap font-['DejaVu_Sans',sans-serif] text-[32px] font-bold leading-[40px] tracking-[-0.57px] text-[#333355]">
                  Need more info on IP 188.138.9.49?
                </h2>
                <div className="h-[60px] rounded-t-[12px] bg-[#f4f4f4]" />
              </div>
            </div>
            <div className="w-[30px] border-l-2 border-[#e7e7e7] bg-[#fafafa] pl-[6px] pt-[289px]">
              <div className="h-[432px] w-[16px] rounded-full bg-[#c1c1c1]" />
            </div>
            <ShareRail />
            <div className="absolute left-0 top-[513px] flex h-[255px] w-[72px] items-center justify-center rounded-r-[10px] border-4 border-l-0 border-white bg-[#3e4a80] pr-[6px] shadow-[0_0_8px_rgba(0,0,0,0.45)]">
              <span className="whitespace-nowrap text-[28px] leading-[30px] tracking-[-0.1px] text-white [-webkit-text-stroke:0.4px_white] [writing-mode:vertical-rl]">
                Leave Feedback
              </span>
            </div>
          </div>
        </div>
      </div>
    </div>
  );
}
